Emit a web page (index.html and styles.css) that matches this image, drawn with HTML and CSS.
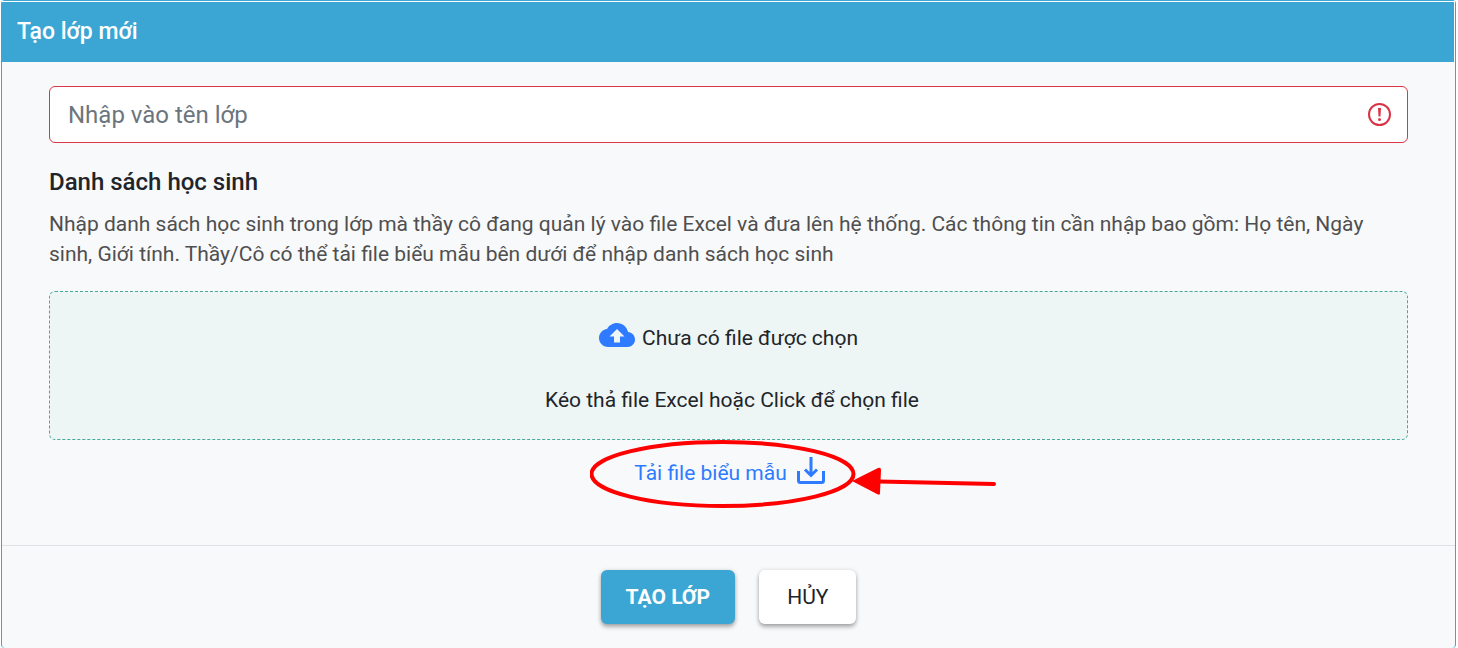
FILE: index.html
```html
<!DOCTYPE html>
<html lang="vi">
<head>
<meta charset="utf-8">
<meta name="viewport" content="width=device-width, initial-scale=1">
<title>Tạo lớp mới</title>
<link rel="stylesheet" href="styles.css">
</head>
<body>
<form class="dialog">
  <header class="dialog-header">
    <h1 class="dialog-title">Tạo lớp mới</h1>
  </header>
  <main class="dialog-body">
    <div class="name-field">
      <input class="name-input" type="text" placeholder="Nhập vào tên lớp" aria-label="Nhập vào tên lớp" aria-invalid="true">
      <svg class="error-icon" viewBox="0 0 24 24" aria-hidden="true">
        <circle cx="12.500" cy="11.500" r="10.500" fill="none" stroke="currentColor" stroke-width="2"/>
        <path d="M11 5h3l-.5 8.500h-2z" fill="currentColor"/>
        <circle cx="12.500" cy="16.500" r="1.500" fill="currentColor"/>
      </svg>
    </div>
    <h2 class="section-title">Danh sách học sinh</h2>
    <p class="section-text">Nhập danh sách học sinh trong lớp mà thầy cô đang quản lý vào file Excel và đưa lên hệ thống. Các thông tin cần nhập bao gồm: Họ tên, Ngày sinh, Giới tính. Thầy/Cô có thể tải file biểu mẫu bên dưới để nhập danh sách học sinh</p>
    <label class="dropzone" for="excel-file">
      <input class="file-input" id="excel-file" type="file" accept=".xls,.xlsx">
      <span class="file-status">
        <svg class="cloud-icon" viewBox="0 4 24 16" aria-hidden="true">
          <path fill="currentColor" d="M19.35 10.04C18.67 6.59 15.64 4 12 4 9.11 4 6.6 5.64 5.35 8.04 2.34 8.36 0 10.91 0 14c0 3.31 2.69 6 6 6h13c2.76 0 5-2.24 5-5 0-2.64-2.05-4.78-4.65-4.96zM14 13v4h-4v-4H7l5-5 5 5h-3z"/>
        </svg>
        Chưa có file được chọn
      </span>
      <span class="drop-hint">Kéo thả file Excel hoặc Click để chọn file</span>
    </label>
    <div class="template-row">
      <a class="template-link" href="#">Tải file biểu mẫu
        <svg class="download-icon" viewBox="0 0 28 28" aria-hidden="true">
          <path d="M1.500 14v9.500a2 2 0 0 0 2 2h21a2 2 0 0 0 2-2V14M14 0v18M8 12.500l6 6 6-6" fill="none" stroke="currentColor" stroke-width="3"/>
        </svg>
      </a>
      <svg class="callout" viewBox="0 0 408 70" aria-hidden="true">
        <ellipse cx="132.500" cy="34" rx="131" ry="32" fill="none" stroke="currentColor" stroke-width="4"/>
        <path d="M289 41.500L404 44" stroke="currentColor" stroke-width="4" stroke-linecap="round"/>
        <path d="M262 41l26-13q3-1 3 2l-1 23q0 3-3 1z" fill="currentColor"/>
      </svg>
    </div>
  </main>
  <footer class="dialog-footer">
    <button class="button button-primary" type="submit">TẠO LỚP</button>
    <button class="button button-plain" type="button">HỦY</button>
  </footer>
</form>
</body>
</html>
```
FILE: styles.css
```css
* {
  box-sizing: border-box;
}

body {
  margin: 0 2px 0 1px;
  background: #fff;
  color: #212529;
  font-family: Roboto, sans-serif;
  font-size: 21px;
  line-height: 30px;
}

.dialog {
  display: flex;
  flex-direction: column;
  min-height: 100vh;
  border: 1px solid #3ba6d4;
  border-bottom: 0;
  border-radius: 4px;
  background: #f8f9fb;
}

.dialog-header {
  padding: 15px 15px;
  border-top: 1px solid #fff;
  border-right: 1px solid #fff;
  background: #3ba6d4;
  background-clip: padding-box;
}

.dialog-title {
  margin: 0;
  color: #fff;
  font-size: 23px;
  font-weight: 500;
  line-height: 30px;
}

.dialog-body {
  flex: 1;
  padding: 24px 47px 0;
}

.name-field {
  position: relative;
}

.name-input {
  display: block;
  width: 100%;
  height: 57px;
  padding: 0 56px 0 18px;
  border: 1px solid #dc3545;
  border-radius: 6px;
  background: #fff;
  color: inherit;
  font-family: inherit;
  font-size: 24px;
}

.name-input::placeholder {
  color: #6c757d;
  opacity: 1;
}

.error-icon {
  position: absolute;
  top: 17px;
  right: 17px;
  width: 24px;
  height: 24px;
  color: #d93445;
}

.section-title {
  margin: 24px 0 12px;
  font-size: 24px;
  font-weight: 500;
  line-height: 30px;
}

.section-text {
  margin: 0 0 22px;
  color: #4f4f4f;
}

.dropzone {
  display: flex;
  flex-direction: column;
  align-items: center;
  gap: 32px;
  padding: 31px 0 24px;
  border: 1px dashed #45a899;
  border-radius: 6px;
  background: #edf5f5;
  cursor: pointer;
}

.file-input {
  position: absolute;
  width: 1px;
  height: 1px;
  opacity: 0;
}

.file-status {
  display: flex;
  align-items: flex-start;
  gap: 7px;
}

.drop-hint {
  padding-left: 7px;
}

.cloud-icon {
  width: 36px;
  height: 24px;
  color: #2f7bff;
}

.template-row {
  display: flex;
  justify-content: center;
  position: relative;
  padding: 17px 0 0 2px;
}

.template-link {
  display: flex;
  align-items: flex-start;
  gap: 10px;
  color: #2f7bff;
  line-height: 32px;
  text-decoration: none;
}

.download-icon {
  width: 28px;
  height: 28px;
}

.callout {
  position: absolute;
  top: 0;
  left: calc(50% - 139px);
  width: 408px;
  height: 70px;
  color: #f00;
  pointer-events: none;
}

.dialog-footer {
  display: flex;
  justify-content: center;
  gap: 24px;
  padding: 24px 16px;
  border-top: 1px solid #dee2e6;
}

.button {
  height: 54px;
  padding: 0 25px;
  border: 0;
  border-radius: 6px;
  box-shadow: 0 3px 4px rgba(0, 0, 0, 0.3), 0 0 4px rgba(0, 0, 0, 0.12);
  font-family: inherit;
  font-size: 21px;
  font-weight: 700;
  cursor: pointer;
}

.button-primary {
  background: #3ba6d4;
  color: #fff;
}

.button-plain {
  padding: 0 28px;
  background: #fff;
  color: #212529;
  font-weight: 400;
}
```
